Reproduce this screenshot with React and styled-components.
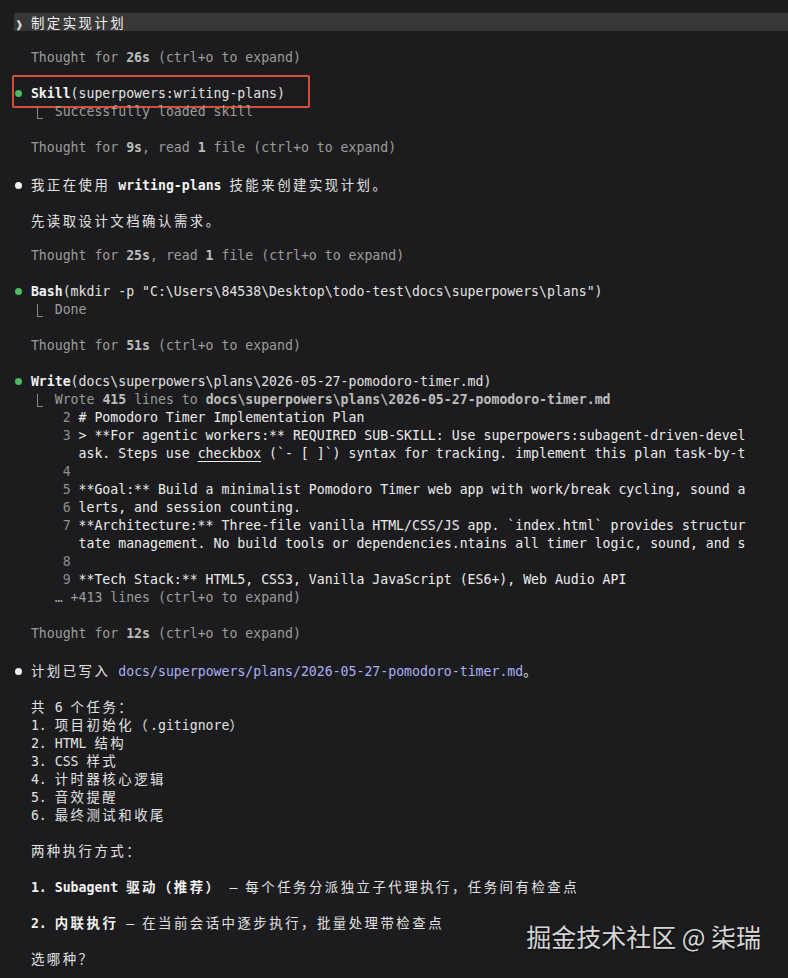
import React from "react";
import styled, { createGlobalStyle } from "styled-components";

const WIDE = /([\u2E80-\u9FFF\uF900-\uFAFF\uFE30-\uFE4F\uFF00-\uFF60\uFFE0-\uFFE6\u3000-\u303F]+)/;

// terminal cells: CJK glyphs take two columns
const Cells = ({ children }) =>
  String(children)
    .split(WIDE)
    .map((part, i) =>
      WIDE.test(part) ? <Wide key={i}>{part}</Wide> : part
    );

const App = () => {
  return (
    <Screen>
      <GlobalStyle />
      <HeaderBar>
        <Chevron>❱</Chevron> <Cells>制定实现计划</Cells>
      </HeaderBar>
      <Row />
      <Thought secs="26s" />
      <Row />
      <Row>
        <Highlight />
        <Dot $tone="green" /> <Strong>Skill</Strong>(superpowers:writing-plans)
      </Row>
      <Result>
        <Dim>Successfully loaded skill</Dim>
      </Result>
      <Row />
      <Thought secs="9s" files />
      <Row />
      <Row>
        <Dot $tone="white" /> <Cells>我正在使用</Cells> <Strong>writing-plans</Strong>{" "}
        <Cells>技能来创建实现计划。</Cells>
      </Row>
      <Row />
      <Row>
        {"  "}
        <Cells>先读取设计文档确认需求。</Cells>
      </Row>
      <Row />
      <Thought secs="25s" files />
      <Row />
      <Row>
        <Dot $tone="green" /> <Strong>Bash</Strong>(mkdir -p
        "C:\Users\84538\Desktop\todo-test\docs\superpowers\plans")
      </Row>
      <Result>
        <Dim>Done</Dim>
      </Result>
      <Row />
      <Thought secs="51s" />
      <Row />
      <Row>
        <Dot $tone="green" /> <Strong>Write</Strong>
        (docs\superpowers\plans\2026-05-27-pomodoro-timer.md)
      </Row>
      <Result>
        <Dim>
          Wrote <DimBold>415</DimBold> lines to{" "}
          <DimBold>docs\superpowers\plans\2026-05-27-pomodoro-timer.md</DimBold>
        </Dim>
      </Result>
      <CodeRow n="2"># Pomodoro Timer Implementation Plan</CodeRow>
      <CodeRow n="3">
        {"> **For agentic workers:** REQUIRED SUB-SKILL: Use superpowers:subagent-driven-devel"}
      </CodeRow>
      <CodeRow>
        ask. Steps use <Under>checkbox</Under>
        {" (`- [ ]`) syntax for tracking. implement this plan task-by-t"}
      </CodeRow>
      <CodeRow n="4" />
      <CodeRow n="5">
        **Goal:** Build a minimalist Pomodoro Timer web app with work/break cycling, sound a
      </CodeRow>
      <CodeRow n="6">lerts, and session counting.</CodeRow>
      <CodeRow n="7">
        {"**Architecture:** Three-file vanilla HTML/CSS/JS app. `index.html` provides structur"}
      </CodeRow>
      <CodeRow>
        tate management. No build tools or dependencies.ntains all timer logic, sound, and s
      </CodeRow>
      <CodeRow n="8" />
      <CodeRow n="9">
        **Tech Stack:** HTML5, CSS3, Vanilla JavaScript (ES6+), Web Audio API
      </CodeRow>
      <Row>
        <Dim>{"     … +413 lines (ctrl+o to expand)"}</Dim>
      </Row>
      <Row />
      <Thought secs="12s" />
      <Row />
      <Row>
        <Dot $tone="white" /> <Cells>计划已写入</Cells>{" "}
        <Link>docs/superpowers/plans/2026-05-27-pomodoro-timer.md</Link>
        <Cells>。</Cells>
      </Row>
      <Row />
      <Row>
        {"  "}
        <Cells>共 6 个任务：</Cells>
      </Row>
      <Row>
        {"  1. "}
        <Cells>项目初始化（.gitignore）</Cells>
      </Row>
      <Row>
        {"  2. HTML "}
        <Cells>结构</Cells>
      </Row>
      <Row>
        {"  3. CSS "}
        <Cells>样式</Cells>
      </Row>
      <Row>
        {"  4. "}
        <Cells>计时器核心逻辑</Cells>
      </Row>
      <Row>
        {"  5. "}
        <Cells>音效提醒</Cells>
      </Row>
      <Row>
        {"  6. "}
        <Cells>最终测试和收尾</Cells>
      </Row>
      <Row />
      <Row>
        {"  "}
        <Cells>两种执行方式：</Cells>
      </Row>
      <Row />
      <Row>
        {"  "}
        <Strong>
          1. Subagent <Cells>驱动（推荐）</Cells>
        </Strong>{" "}
        – <Cells>每个任务分派独立子代理执行，任务间有检查点</Cells>
      </Row>
      <Row />
      <Row>
        {"  "}
        <Strong>
          2. <Cells>内联执行</Cells>
        </Strong>{" "}
        – <Cells>在当前会话中逐步执行，批量处理带检查点</Cells>
      </Row>
      <Row />
      <Row>
        {"  "}
        <Cells>选哪种？</Cells>
      </Row>
      <Watermark>掘金技术社区 @ 柒瑞</Watermark>
    </Screen>
  );
};

const Thought = ({ secs, files }) => (
  <Row>
    <Dim>
      {"  "}Thought for <DimBold>{secs}</DimBold>
      {files ? (
        <>
          , read <DimBold>1</DimBold> file
        </>
      ) : null}{" "}
      (ctrl+o to expand)
    </Dim>
  </Row>
);

// "  ⎿  result" — the elbow spans columns 2-3
const Result = ({ children }) => (
  <Row>
    {"  "}
    <Elbow />
    {" "}
    {children}
  </Row>
);

const CodeRow = ({ n, children }) => (
  <Row>
    <LineNo>{n ? `      ${n} ` : "        "}</LineNo>
    <Code>{children}</Code>
  </Row>
);

const GlobalStyle = createGlobalStyle`
  html, body {
    margin: 0;
    padding: 0;
    background: #1c1c1e;
  }
`;

const Screen = styled.div`
  position: relative;
  min-height: 978px;
  box-sizing: border-box;
  padding: 14px 0 0 15px;
  background: #1c1c1e;
  color: #e2e2e2;
  font-family: "DejaVu Sans Mono", "Noto Sans CJK SC", monospace;
  font-size: 13.2px;
  line-height: 18px;
  overflow: hidden;
`;

const Row = styled.div`
  position: relative;
  height: 18px;
  white-space: pre;
`;

const HeaderBar = styled(Row)`
  margin-top: -1px;
  margin-left: -1px;
  padding-left: 1px;
  background: #373737;
  color: #f0f0f0;
`;

const Chevron = styled.span`
  font-family: "DejaVu Sans", sans-serif;
  font-size: 10px;
  color: #d8d8d8;
  display: inline-block;
  width: 7.95px;
`;

const Wide = styled.span`
  font-family: "Noto Sans CJK SC", sans-serif;
  font-size: 13.4px;
  letter-spacing: 2.5px;
`;

const Dot = styled.span`
  display: inline-block;
  width: 7px;
  height: 7px;
  margin-right: 0.95px;
  border-radius: 50%;
  vertical-align: middle;
  position: relative;
  top: -1px;
  background: ${(p) => (p.$tone === "green" ? "#4cbd5e" : "#f2f2f2")};
`;

const Elbow = styled.span`
  display: inline-block;
  box-sizing: border-box;
  width: 6px;
  height: 13px;
  margin-left: 6px;
  margin-right: 3.9px;
  border-left: 1px solid #8a8a8a;
  border-bottom: 1px solid #8a8a8a;
  vertical-align: -3px;
`;

const Strong = styled.span`
  font-weight: bold;
  color: #f2f2f2;
`;

const Dim = styled.span`
  color: #9c9c9c;
`;

const DimBold = styled.span`
  font-weight: bold;
  color: #bcbcbc;
`;

const LineNo = styled.span`
  color: #8e8e8e;
`;

const Code = styled.span`
  color: #ececec;
`;

const Under = styled.span`
  text-decoration: underline;
  text-underline-offset: 3px;
`;

const Link = styled.span`
  color: #aab0f5;
`;

const Highlight = styled.div`
  position: absolute;
  left: -3px;
  top: -10px;
  width: 298px;
  height: 33px;
  box-sizing: border-box;
  border: 2px solid #d5503b;
  border-radius: 2px;
  pointer-events: none;
`;

const Watermark = styled.div`
  position: absolute;
  right: 27px;
  top: 920px;
  font-family: "Noto Sans CJK SC", sans-serif;
  font-size: 25px;
  line-height: 32px;
  color: #d6d6d6;
  text-shadow: 0 1px 2px rgba(0, 0, 0, 0.7);
  white-space: pre;
`;

export default App;
